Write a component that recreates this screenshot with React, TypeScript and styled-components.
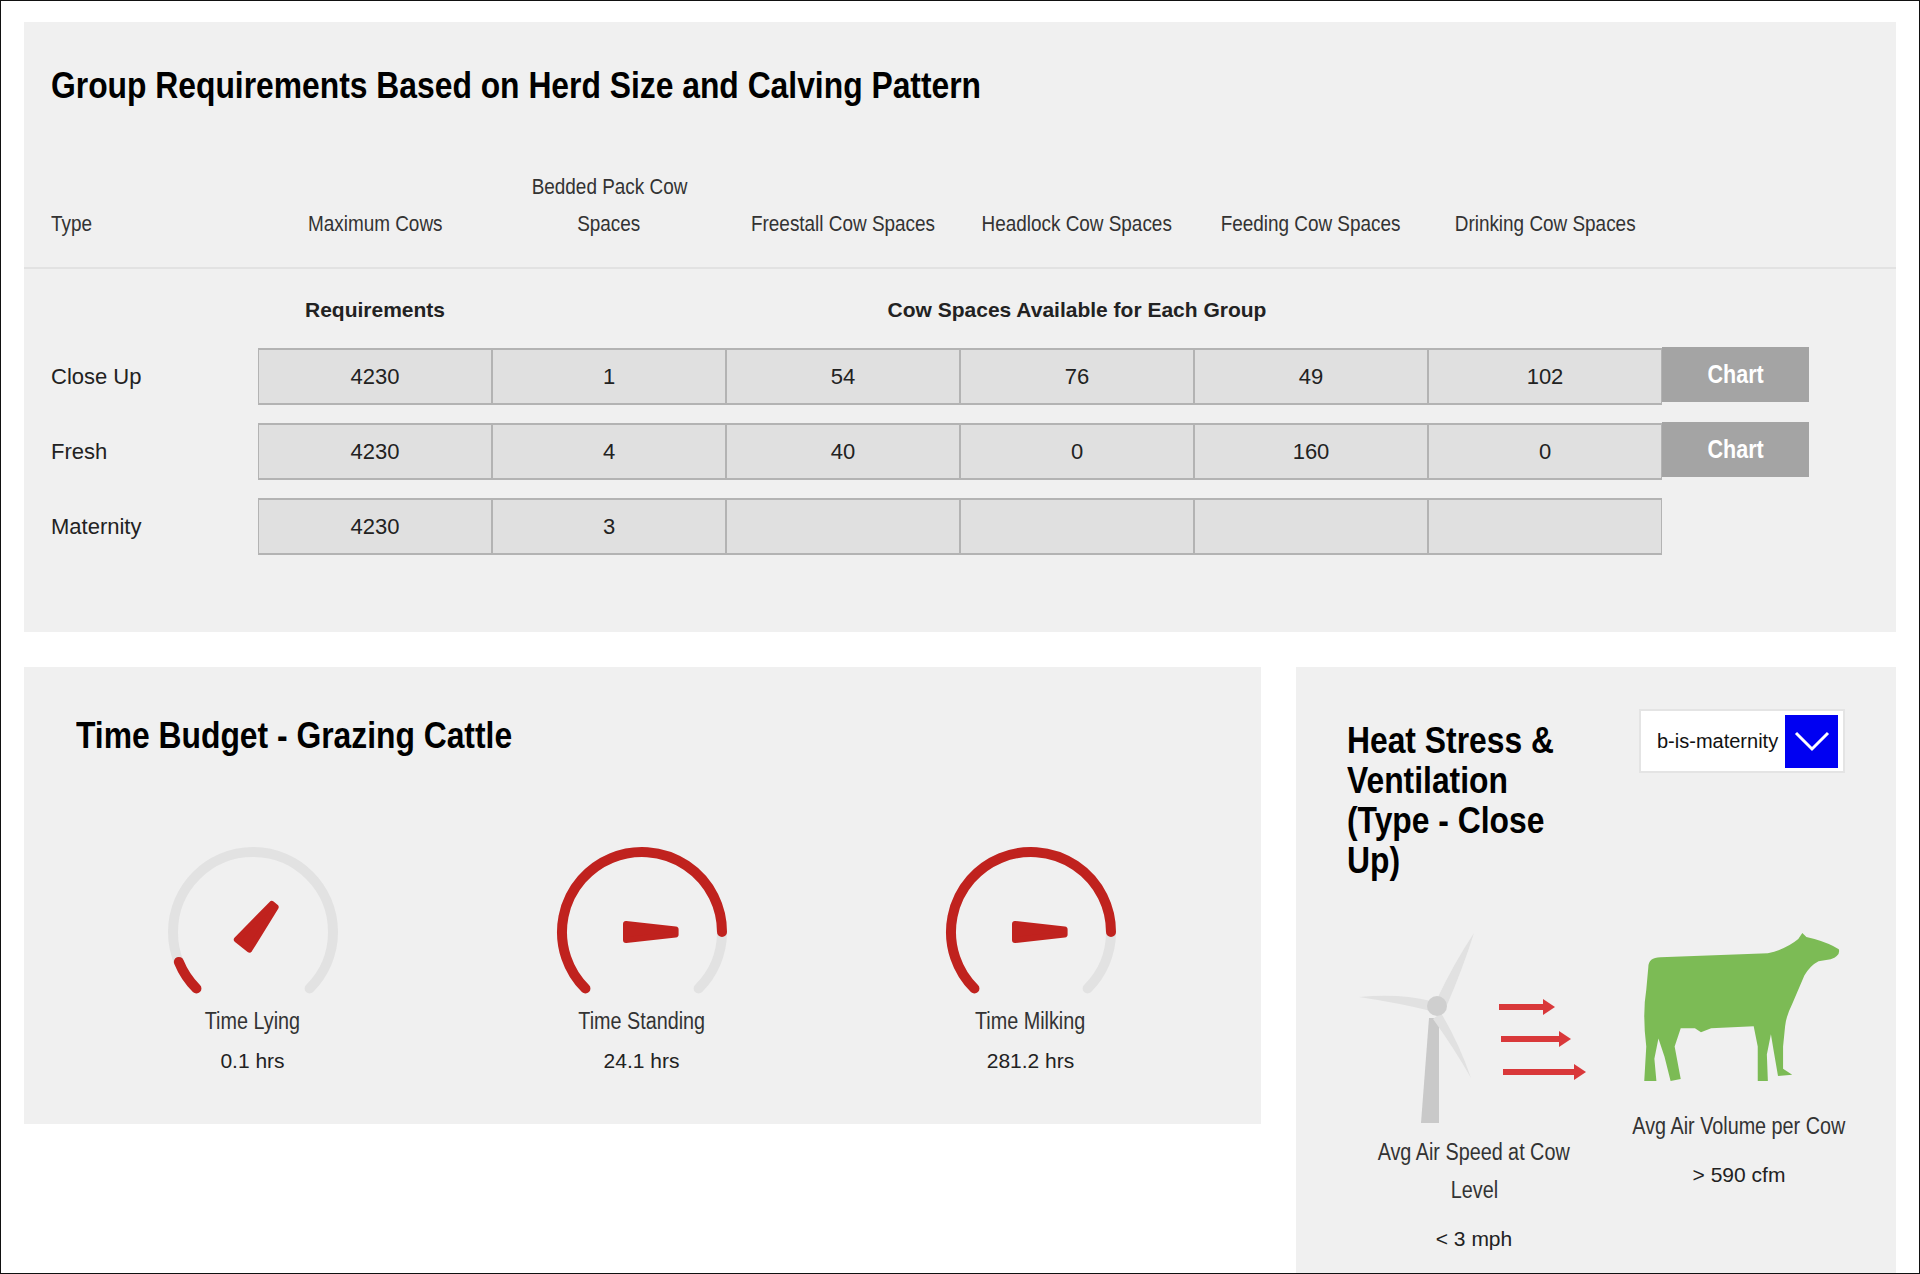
import React from "react";
import styled, { createGlobalStyle } from "styled-components";

const Global = createGlobalStyle`
  html, body { margin: 0; padding: 0; background: #fff; }
  body { font-family: "Liberation Sans", Arial, sans-serif; color: #222; }
`;

const Page = styled.div`
  box-sizing: border-box;
  width: 1920px;
  height: 1274px;
  border: 1px solid #111;
  padding: 21px 23px 0 23px;
  display: flex;
  flex-direction: column;
  gap: 35px;
  overflow: hidden;
`;

const Panel = styled.section`
  background: #f0f0f0;
  flex-shrink: 0;
`;

const TopPanel = styled(Panel)`
  height: 610px;
`;

const Narrow = styled.span<{ $o?: string }>`
  display: inline-block;
  transform: scaleX(0.86);
  transform-origin: ${(p) => p.$o || "center"};
  white-space: nowrap;
`;

const Title = styled.h2`
  margin: 0;
  font-size: 37px;
  font-weight: 700;
  color: #000;
  line-height: 1;
`;

const TopTitle = styled(Title)`
  padding: 45px 0 0 27px;
  height: 90px;
  box-sizing: border-box;
`;

const Grid = styled.div`
  display: grid;
  grid-template-columns: 207px repeat(6, 234px) 147px;
  padding-left: 27px;
`;

const HeadRow = styled(Grid)`
  height: 157px;
  align-items: end;
  padding-bottom: 25px;
  box-sizing: border-box;
  border-bottom: 2px solid #e2e2e2;
  font-size: 22px;
  color: #333;
`;

const HeadCell = styled.div<{ $left?: boolean }>`
  text-align: ${(p) => (p.$left ? "left" : "center")};
  line-height: 37px;
`;

const SubRow = styled(Grid)`
  padding-top: 29px;
  height: 79px;
  box-sizing: border-box;
  font-size: 21px;
  font-weight: 700;
  color: #222;
`;

const SubCell = styled.div<{ $span?: number }>`
  grid-column: span ${(p) => p.$span || 1};
  text-align: center;
`;

const DataRow = styled(Grid)`
  height: 57px;
  margin-top: 18px;
  align-items: stretch;
  &:first-of-type { margin-top: 0; }
`;

const RowLabel = styled.div`
  display: flex;
  align-items: center;
  font-size: 22px;
  color: #222;
`;

const Cell = styled.div`
  background: #e0e0e0;
  border: 2px solid #b3b3b3;
  border-left-width: 1px;
  border-right-width: 1px;
  display: flex;
  align-items: center;
  justify-content: center;
  font-size: 22px;
  color: #222;
`;

const ChartBtn = styled.button`
  background: #a4a4a4;
  border: none;
  color: #fff;
  font-family: "Liberation Sans", Arial, sans-serif;
  font-weight: 700;
  font-size: 25px;
  height: 55px;
  margin-top: -1px;
  cursor: pointer;
`;

const Rows = styled.div`
  display: flex;
  flex-direction: column;
`;

const Bottom = styled.div`
  display: flex;
  gap: 35px;
  align-items: flex-start;
`;

const TimePanel = styled(Panel)`
  width: 1237px;
  height: 457px;
  padding: 50px 0 0 52px;
  box-sizing: border-box;
`;

const Gauges = styled.div`
  display: flex;
  margin-top: 92px;
  margin-left: -18px;
`;

const GaugeBox = styled.div`
  width: 389px;
  display: flex;
  flex-direction: column;
  align-items: center;
`;

const GaugeLabel = styled.div`
  font-size: 23px;
  color: #333;
  margin-top: 12px;
`;

const GaugeValue = styled.div`
  font-size: 21px;
  color: #222;
  margin-top: 14px;
`;

const HeatPanel = styled(Panel)`
  width: 600px;
  height: 620px;
  padding: 42px 0 0 51px;
  box-sizing: border-box;
`;

const HeatTop = styled.div`
  display: flex;
  justify-content: space-between;
  padding-right: 51px;
`;

const HeatTitle = styled(Title)`
  width: 240px;
  line-height: 40px;
  margin-top: 12px;
`;

const Select = styled.div`
  width: 206px;
  height: 64px;
  background: #fff;
  border: 2px solid #e4e4e4;
  box-sizing: border-box;
  display: flex;
  align-items: center;
  padding: 5px 5px 5px 16px;
  gap: 4px;
`;

const SelectText = styled.div`
  flex: 1;
  overflow: hidden;
  white-space: nowrap;
  font-size: 20px;
  color: #111;
`;

const SelectBtn = styled.div`
  width: 53px;
  height: 53px;
  flex-shrink: 0;
  background: #0000f2;
  display: flex;
  align-items: center;
  justify-content: center;
`;

const AirRow = styled.div`
  display: flex;
  margin-top: 52px;
  margin-left: -8px;
`;

const AirCol = styled.div<{ $w: number }>`
  width: ${(p) => p.$w}px;
  display: flex;
  flex-direction: column;
  align-items: center;
  text-align: center;
`;

const AirLabel = styled.div<{ $mt?: number }>`
  font-size: 23px;
  line-height: 38px;
  color: #333;
  margin-top: ${(p) => p.$mt || 0}px;
`;

const AirValue = styled.div`
  font-size: 21px;
  color: #222;
  margin-top: 18px;
`;

const RED = "#c0221e";
const GRAY = "#e2e2e2";

function polar(cx: number, cy: number, r: number, a: number) {
  const rad = (a * Math.PI) / 180;
  return [cx + r * Math.sin(rad), cy - r * Math.cos(rad)];
}
function arc(cx: number, cy: number, r: number, a1: number, a2: number) {
  const [x1, y1] = polar(cx, cy, r, a1);
  const [x2, y2] = polar(cx, cy, r, a2);
  const large = a2 - a1 > 180 ? 1 : 0;
  return `M${x1} ${y1} A${r} ${r} 0 ${large} 1 ${x2} ${y2}`;
}

function Gauge({ fill, needle }: { fill: number; needle: number }) {
  const cx = 100, cy = 86, r = 80;
  const start = -135, end = 135;
  const [tx, ty] = polar(cx, cy, r * 0.42, needle);
  const [bx, by] = polar(cx, cy, -r * 0.2, needle);
  const rad = (needle * Math.PI) / 180;
  const px = Math.cos(rad), py = Math.sin(rad);
  const w = 8, tw = 2.5;
  const d = `M${bx + px * w} ${by + py * w} L${tx + px * tw} ${ty + py * tw} L${tx - px * tw} ${ty - py * tw} L${bx - px * w} ${by - py * w} Z`;
  return (
    <svg width="200" height="150" viewBox="0 0 200 150">
      <path d={arc(cx, cy, r, start, end)} stroke={GRAY} strokeWidth="10" fill="none" strokeLinecap="round" />
      <path d={arc(cx, cy, r, start, fill)} stroke={RED} strokeWidth="10" fill="none" strokeLinecap="round" />
      <path d={d} fill={RED} stroke={RED} strokeWidth="6" strokeLinejoin="round" />
    </svg>
  );
}

function Windmill() {
  return (
    <svg width="230" height="200" viewBox="0 0 230 200">
      <polygon points="70,85 80,85 80,190 62,190" fill="#c9c9c9" />
      <path d="M72 68 Q40 60 0 64 Q40 70 72 78 Z" fill="#e1e1e1" />
      <path d="M78 66 Q95 30 115 0 Q104 35 88 72 Z" fill="#e1e1e1" />
      <path d="M82 80 Q100 110 112 145 Q95 115 74 86 Z" fill="#e1e1e1" />
      <circle cx="78" cy="73" r="10" fill="#cfcfcf" />
      <g fill="#d9383a">
        <rect x="140" y="71" width="44" height="6" />
        <polygon points="184,66 196,74 184,82" />
        <rect x="142" y="103" width="60" height="6" />
        <polygon points="200,98 212,106 200,114" />
        <rect x="144" y="136" width="73" height="6" />
        <polygon points="215,131 227,139 215,147" />
      </g>
    </svg>
  );
}

function Cow() {
  return (
    <svg width="205" height="152" viewBox="0 0 200 150">
      <path
        fill="#7cbb55"
        d="M10 34 Q10 24 22 24 L128 20 Q146 16 158 6 L162 0 L166 4 L174 6 Q188 10 198 16 Q200 22 190 26 L178 28 Q170 32 164 42 L152 70 Q146 82 145 92 L143 112 L143 134 L152 140 L138 141 L134 118 L131 100 L127 120 L128 146 L118 146 L118 112 L114 92 L72 94 L62 98 L56 94 L42 94 L36 112 L42 144 L32 146 L26 122 L20 104 L16 124 L18 146 L6 146 L8 112 Q4 80 8 56 Z"
      />
    </svg>
  );
}

const rows = [
  { name: "Close Up", vals: ["4230", "1", "54", "76", "49", "102"], chart: true },
  { name: "Fresh", vals: ["4230", "4", "40", "0", "160", "0"], chart: true },
  { name: "Maternity", vals: ["4230", "3", "", "", "", ""], chart: false },
];

export default function App() {
  return (
    <>
      <Global />
      <Page>
        <TopPanel>
          <TopTitle><Narrow $o="left">Group Requirements Based on Herd Size and Calving Pattern</Narrow></TopTitle>
          <HeadRow>
            <HeadCell $left><Narrow $o="left">Type</Narrow></HeadCell>
            <HeadCell><Narrow>Maximum Cows</Narrow></HeadCell>
            <HeadCell><Narrow>Bedded Pack Cow</Narrow><br /><Narrow>Spaces</Narrow></HeadCell>
            <HeadCell><Narrow>Freestall Cow Spaces</Narrow></HeadCell>
            <HeadCell><Narrow>Headlock Cow Spaces</Narrow></HeadCell>
            <HeadCell><Narrow>Feeding Cow Spaces</Narrow></HeadCell>
            <HeadCell><Narrow>Drinking Cow Spaces</Narrow></HeadCell>
            <div />
          </HeadRow>
          <SubRow>
            <div />
            <SubCell>Requirements</SubCell>
            <SubCell $span={5}>Cow Spaces Available for Each Group</SubCell>
          </SubRow>
          <Rows>
            {rows.map((r) => (
              <DataRow key={r.name}>
                <RowLabel>{r.name}</RowLabel>
                {r.vals.map((v, i) => (
                  <Cell key={i}>{v}</Cell>
                ))}
                {r.chart ? <ChartBtn><Narrow>Chart</Narrow></ChartBtn> : <div />}
              </DataRow>
            ))}
          </Rows>
        </TopPanel>
        <Bottom>
          <TimePanel>
            <Title><Narrow $o="left">Time Budget - Grazing Cattle</Narrow></Title>
            <Gauges>
              <GaugeBox>
                <Gauge fill={-112} needle={38} />
                <GaugeLabel><Narrow>Time Lying</Narrow></GaugeLabel>
                <GaugeValue>0.1 hrs</GaugeValue>
              </GaugeBox>
              <GaugeBox>
                <Gauge fill={90} needle={90} />
                <GaugeLabel><Narrow>Time Standing</Narrow></GaugeLabel>
                <GaugeValue>24.1 hrs</GaugeValue>
              </GaugeBox>
              <GaugeBox>
                <Gauge fill={90} needle={90} />
                <GaugeLabel><Narrow>Time Milking</Narrow></GaugeLabel>
                <GaugeValue>281.2 hrs</GaugeValue>
              </GaugeBox>
            </Gauges>
          </TimePanel>
          <HeatPanel>
            <HeatTop>
              <HeatTitle><Narrow $o="left">Heat Stress &amp;</Narrow><br /><Narrow $o="left">Ventilation</Narrow><br /><Narrow $o="left">(Type - Close</Narrow><br /><Narrow $o="left">Up)</Narrow></HeatTitle>
              <Select>
                <SelectText>b-is-maternity</SelectText>
                <SelectBtn>
                  <svg width="36" height="22" viewBox="0 0 36 22">
                    <path d="M2 3 L18 19 L34 3" stroke="#fff" strokeWidth="3" fill="none" />
                  </svg>
                </SelectBtn>
              </Select>
            </HeatTop>
            <AirRow>
              <AirCol $w={270}>
                <Windmill />
                <AirLabel><Narrow>Avg Air Speed at Cow</Narrow><br /><Narrow>Level</Narrow></AirLabel>
                <AirValue>&lt; 3 mph</AirValue>
              </AirCol>
              <AirCol $w={260}>
                <Cow />
                <AirLabel $mt={22}><Narrow>Avg Air Volume per Cow</Narrow></AirLabel>
                <AirValue>&gt; 590 cfm</AirValue>
              </AirCol>
            </AirRow>
          </HeatPanel>
        </Bottom>
      </Page>
    </>
  );
}
